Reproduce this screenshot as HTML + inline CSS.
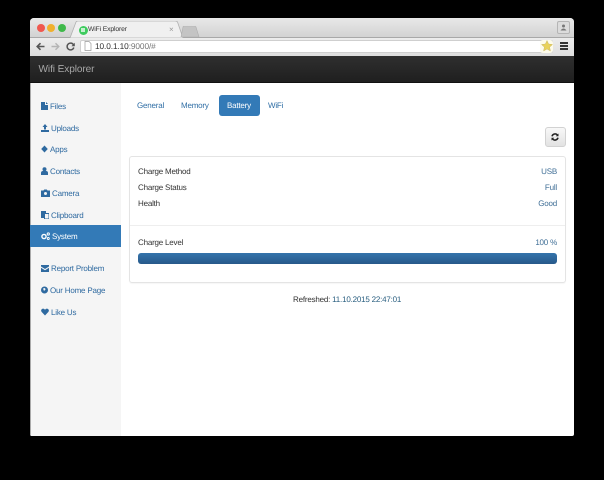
<!DOCTYPE html>
<html lang="en">
<head>
<meta charset="utf-8">
<title>Wifi Explorer</title>
<style>
html,body{margin:0;padding:0;background:#000;}
body{width:604px;height:480px;overflow:hidden;position:relative;font-family:"Liberation Sans",Arial,sans-serif;font-size:8px;letter-spacing:-.2px;color:#333;text-rendering:geometricPrecision;}
.a{position:absolute;white-space:nowrap;}
#win{position:absolute;left:30px;top:18px;width:544px;height:418px;background:#fff;border-radius:4px 4px 2px 2px;overflow:hidden;filter:blur(.3px);}
#tabbar{position:absolute;left:0;top:0;width:544px;height:20px;background:linear-gradient(#e8e8e8,#d2d2d2);border-bottom:1px solid #a8a8a8;box-sizing:border-box;}
#toolbar{position:absolute;left:0;top:20px;width:544px;height:18px;background:linear-gradient(#ececec,#dedede);}
#nav{position:absolute;left:0;top:38px;width:544px;height:27px;background:linear-gradient(#2f2f2f,#1f1f1f);border-bottom:1px solid #111;box-sizing:border-box;}
#side{position:absolute;left:0;top:65px;width:91px;height:353px;background:#f5f5f5;border-left:1px solid #aaa;box-sizing:border-box;}
.s{position:absolute;left:11px;color:#2f6aa0;white-space:nowrap;line-height:11px;}
.s svg{vertical-align:-1px;margin-right:2px;}
.t{position:absolute;color:#2f6ea5;line-height:11px;white-space:nowrap;}
.l{position:absolute;left:108px;color:#333;line-height:11px;white-space:nowrap;}
.r{position:absolute;right:17px;color:#3f6e96;line-height:11px;white-space:nowrap;}
</style>
</head>
<body>
<div id="win">
  <div id="tabbar">
    <div class="a" style="left:6.500px;top:6px;width:8px;height:8px;border-radius:50%;background:#f0584f;"></div>
    <div class="a" style="left:17px;top:6px;width:8px;height:8px;border-radius:50%;background:#f0b02e;"></div>
    <div class="a" style="left:28px;top:6px;width:8px;height:8px;border-radius:50%;background:#3fb94a;"></div>
    <svg class="a" style="left:40px;top:3px;" width="125" height="17" viewBox="0 0 125 17"><path d="M0 17 L6 1 Q6.500 0 8 0 L105 0 Q107 0 107.500 1 L113 17 Z" fill="#f0f0f0" stroke="#b0b0b0" stroke-width=".8"/></svg>
    <svg class="a" style="left:150px;top:8px;" width="20" height="11" viewBox="0 0 20 11"><path d="M1 11 L3 1 Q3 0 5 0 L14 0 Q15 0 16 1 L19 11 Z" fill="#c4c4c4" stroke="#adadad" stroke-width=".6"/></svg>
    <div class="a" style="left:48.500px;top:7.500px;width:9px;height:9px;border-radius:50%;background:#3ecb5e;"></div>
    <div class="a" style="left:51px;top:10px;width:4px;height:4px;background:#c5efcf;"></div>
    <div class="a" style="left:58px;top:7px;font-size:6.800px;letter-spacing:-.15px;line-height:10px;color:#333;">WiFi Explorer</div>
    <div class="a" style="left:139px;top:7px;font-size:8px;line-height:10px;color:#999;">×</div>
    <div class="a" style="left:527px;top:3px;width:13px;height:13px;background:#dcdcdc;border:1px solid #b5b5b5;border-radius:2px;box-sizing:border-box;"></div>
    <svg class="a" style="left:530px;top:6px;" width="7" height="7" viewBox="0 0 7 7"><circle cx="3.500" cy="2" r="1.500" fill="#777"/><path d="M0.500 6.500 Q3.500 2.500 6.500 6.500 Z" fill="#777"/></svg>
  </div>
  <div id="toolbar">
    <svg class="a" style="left:6px;top:4px;" width="9" height="9" viewBox="0 0 9 9"><path d="M8.500 4.500H2M4.500 1.200 1.200 4.500 4.500 7.800" fill="none" stroke="#555" stroke-width="1.600"/></svg>
    <svg class="a" style="left:21px;top:4px;" width="9" height="9" viewBox="0 0 9 9"><path d="M.5 4.500H7M4.500 1.200 7.800 4.500 4.500 7.800" fill="none" stroke="#b4b4b4" stroke-width="1.400"/></svg>
    <svg class="a" style="left:36px;top:4px;" width="9" height="9" viewBox="0 0 9 9"><path d="M7.600 3A3.400 3.400 0 1 0 7.800 5.500" fill="none" stroke="#555" stroke-width="1.500"/><path d="M8.800 .8V4.200H5.400Z" fill="#555"/></svg>
    <div class="a" style="left:50px;top:2px;width:473px;height:13px;background:#fff;border:1px solid #cfcfcf;border-radius:2px;box-sizing:border-box;"></div>
    <svg class="a" style="left:54px;top:3px;" width="8" height="10" viewBox="0 0 8 10"><path d="M1 .5H5L7 2.500V9.500H1Z" fill="#fff" stroke="#999" stroke-width=".7"/></svg>
    <div class="a" style="left:65px;top:3px;font-size:8.300px;letter-spacing:-.1px;line-height:11px;color:#333;">10.0.1.10<span style="color:#777;">:9000/#</span></div>
    <div class="a" style="left:510px;top:2px;width:13px;height:13px;background:#fdfbea;border-radius:3px;"></div>
    <svg class="a" style="left:511px;top:2px;" width="12" height="12" viewBox="0 0 12 12"><path d="M6 .5 7.600 4 11.500 4.500 8.600 7.100 9.400 11 6 9 2.600 11 3.400 7.100.5 4.500 4.400 4Z" fill="#e9d258" stroke="#c9b76a" stroke-width=".5"/></svg>
    <div class="a" style="left:530px;top:4px;width:7.500px;height:2px;background:#333;"></div>
    <div class="a" style="left:530px;top:7px;width:7.500px;height:2px;background:#333;"></div>
    <div class="a" style="left:530px;top:10px;width:7.500px;height:2px;background:#333;"></div>
  </div>
  <div id="nav">
    <div class="a" style="left:8.500px;top:7px;font-size:10.100px;letter-spacing:-.1px;line-height:13px;color:#a6a6a6;">Wifi Explorer</div>
  </div>
  <div id="side"></div>
  <div class="a" style="left:0;top:207px;width:91px;height:22px;background:#337ab7;"></div>

  <div class="s" style="top:83px;"><svg width="7" height="8" viewBox="0 0 7 8"><path d="M0 0H4V3H7V8H0ZM5 0 7 2H5Z" fill="#2f6aa0"/></svg>Files</div>
  <div class="s" style="top:105px;"><svg width="8" height="8" viewBox="0 0 8 8"><path d="M4 0 6.500 3H5V5.500H3V3H1.500ZM0 6H8V8H0Z" fill="#2f6aa0"/></svg>Uploads</div>
  <div class="s" style="top:126px;"><svg width="7" height="8" viewBox="0 0 7 8"><path d="M3.500 .5 6.800 4 3.500 7.500 .2 4Z" fill="#2f6aa0"/></svg>Apps</div>
  <div class="s" style="top:148px;"><svg width="7" height="8" viewBox="0 0 7 8"><circle cx="3.500" cy="2.200" r="2" fill="#2f6aa0"/><path d="M0 8V6Q0 4 2 4H5Q7 4 7 6V8Z" fill="#2f6aa0"/></svg>Contacts</div>
  <div class="s" style="top:170px;"><svg width="9" height="8" viewBox="0 0 9 8"><path d="M0 1.500H2.500L3.200.5H5.800L6.500 1.500H9V8H0Z" fill="#2f6aa0"/><circle cx="4.500" cy="4.500" r="1.500" fill="#f5f5f5"/></svg>Camera</div>
  <div class="s" style="top:192px;"><svg width="8" height="8" viewBox="0 0 8 8"><path d="M0 0H5V2H3V7H0Z" fill="#2f6aa0"/><path d="M3.500 2.500H8V8H3.500Z" fill="none" stroke="#2f6aa0" stroke-width="1"/></svg>Clipboard</div>
  <div class="s" style="top:213px;color:#fff;"><svg width="9" height="8" viewBox="0 0 9 8"><circle cx="3" cy="4.500" r="2.100" fill="none" stroke="#fff" stroke-width="1.400"/><circle cx="7.300" cy="2" r="1.100" fill="none" stroke="#fff" stroke-width="1"/><circle cx="7.300" cy="6.500" r="1" fill="none" stroke="#fff" stroke-width=".9"/></svg>System</div>
  <div class="s" style="top:245px;"><svg width="8" height="7" viewBox="0 0 8 7"><path d="M0 0H8V1.500L4 4 0 1.500ZM0 2.700 4 5.200 8 2.700V7H0Z" fill="#2f6aa0"/></svg>Report Problem</div>
  <div class="s" style="top:267px;"><svg width="7" height="8" viewBox="0 0 7 8"><circle cx="3.500" cy="4" r="3.500" fill="#2f6aa0"/><path d="M2 2.500 4 2 4.500 3.500 3 5Z" fill="#f5f5f5"/></svg>Our Home Page</div>
  <div class="s" style="top:289px;"><svg width="8" height="8" viewBox="0 0 8 8"><path d="M4 7.500 .7 4Q-.5 2.500.7 1.200 2.500-.2 4 1.700 5.500-.2 7.300 1.200 8.500 2.500 7.300 4Z" fill="#2f6aa0"/></svg>Like Us</div>

  <div class="t" style="left:107px;top:82px;">General</div>
  <div class="t" style="left:151px;top:82px;">Memory</div>
  <div class="a" style="left:188.500px;top:76.500px;width:41px;height:21.500px;background:#337ab7;border-radius:3px;"></div>
  <div class="t" style="left:197px;top:82px;color:#fff;">Battery</div>
  <div class="t" style="left:238px;top:82px;">WiFi</div>

  <div class="a" style="left:515px;top:109px;width:21px;height:20px;box-sizing:border-box;background:linear-gradient(#f8f8f8,#e2e2e2);border:1px solid #d2d2d2;border-radius:3px;"></div>
  <svg class="a" style="left:521px;top:115px;" width="8" height="8" viewBox="0 0 8 8"><path d="M1 3.300A3.100 3.100 0 0 1 6.500 2.200M7 4.700A3.100 3.100 0 0 1 1.500 5.800" fill="none" stroke="#222" stroke-width="1.500"/><path d="M7.500.5V3.200H4.800ZM.5 7.500V4.800H3.200Z" fill="#222"/></svg>

  <div class="a" style="left:99px;top:138px;width:437px;height:127px;box-sizing:border-box;border:1px solid #e4e4e4;border-radius:3px;box-shadow:0 1px 1px rgba(0,0,0,.04);"></div>
  <div class="l" style="top:148px;">Charge Method</div>
  <div class="r" style="top:148px;">USB</div>
  <div class="l" style="top:164px;">Charge Status</div>
  <div class="r" style="top:164px;">Full</div>
  <div class="l" style="top:180px;">Health</div>
  <div class="r" style="top:180px;">Good</div>
  <div class="a" style="left:100px;top:207px;width:435px;height:1px;background:#eee;"></div>
  <div class="l" style="top:219px;">Charge Level</div>
  <div class="r" style="top:219px;">100 %</div>
  <div class="a" style="left:108px;top:235px;width:419px;height:11px;border-radius:3px;background:linear-gradient(#3474ac,#27598a);"></div>

  <div class="a" style="left:263px;top:276px;line-height:11px;color:#333;">Refreshed: <span style="color:#2a5f80;">11.10.2015 22:47:01</span></div>
</div>
</body>
</html>
